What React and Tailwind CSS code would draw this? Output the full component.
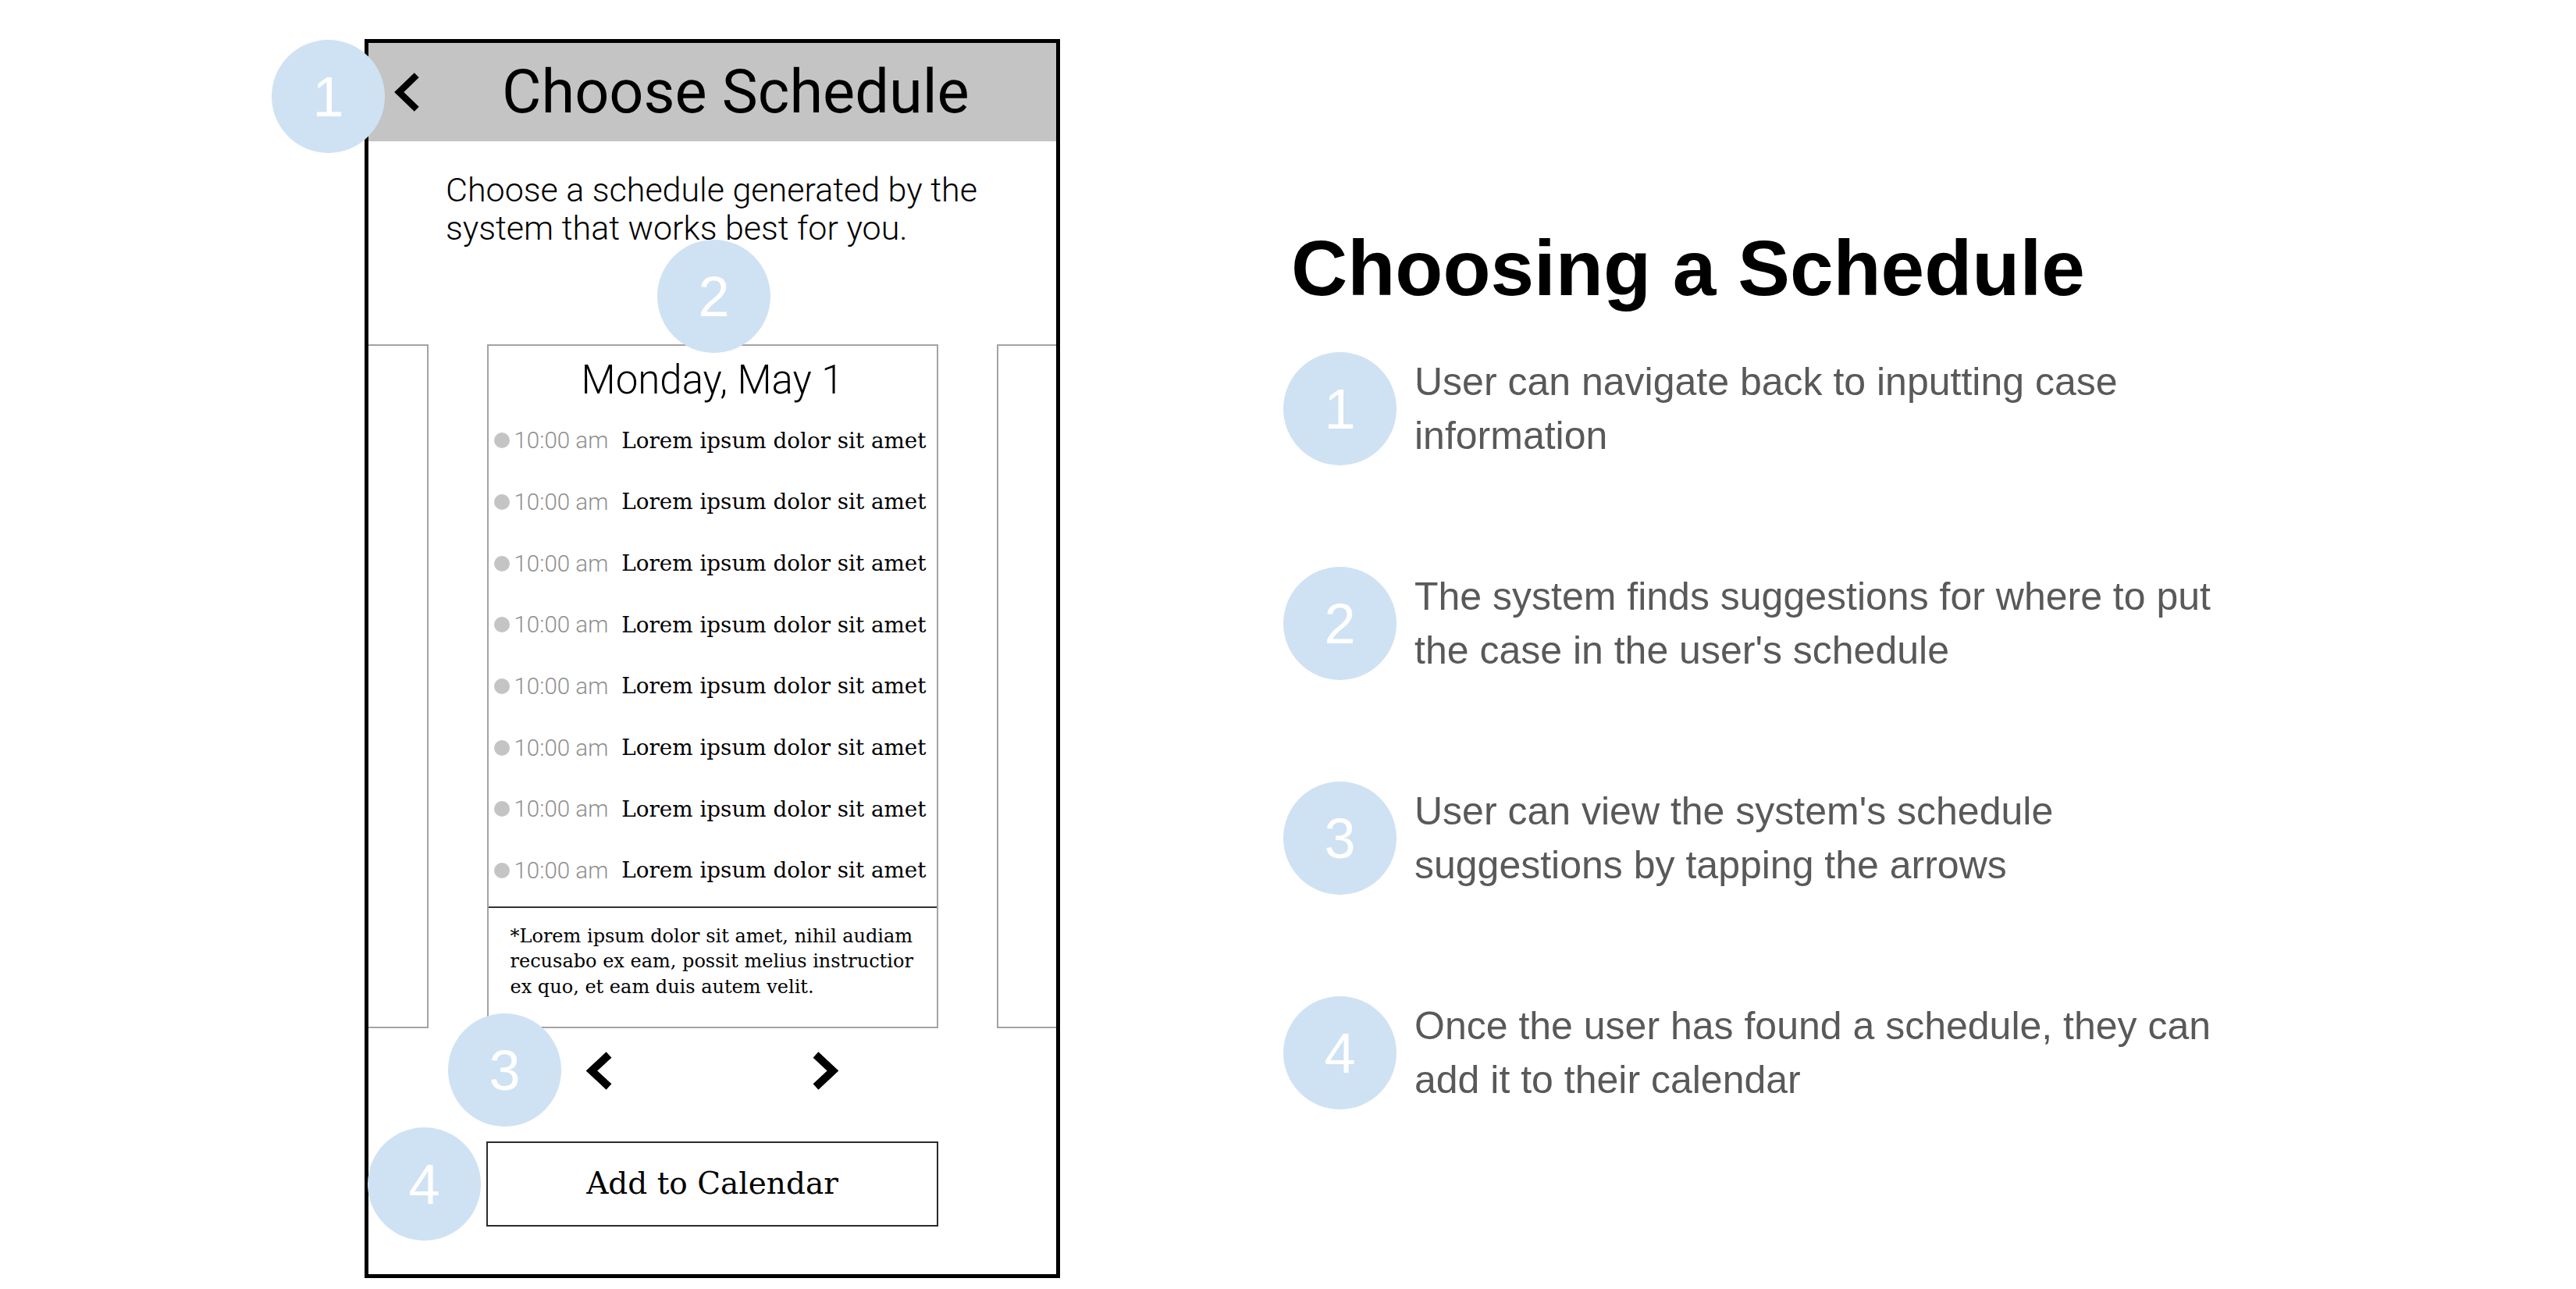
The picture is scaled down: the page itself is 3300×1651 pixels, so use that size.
import React from "react";

const rows = Array.from({ length: 8 }, (_, i) => i);

const notes = [
  { n: "1", lines: ["User can navigate back to inputting case", "information"] },
  { n: "2", lines: ["The system finds suggestions for where to put", "the case in the user's schedule"] },
  { n: "3", lines: ["User can view the system's schedule", "suggestions by tapping the arrows"] },
  { n: "4", lines: ["Once the user has found a schedule, they can", "add it to their calendar"] },
];

function Badge({ n, className = "" }) {
  return (
    <div
      className={`flex h-[145px] w-[145px] shrink-0 items-center justify-center rounded-full bg-[#cfe2f3] text-[72px] leading-none text-white ${className}`}
    >
      {n}
    </div>
  );
}

function Chevron({ dir = "left", w, h, sw }) {
  const pts =
    dir === "left"
      ? `${w - sw / 2},${sw / 2} ${sw / 2 + 2},${h / 2} ${w - sw / 2},${h - sw / 2}`
      : `${sw / 2},${sw / 2} ${w - sw / 2 - 2},${h / 2} ${sw / 2},${h - sw / 2}`;
  return (
    <svg width={w} height={h} viewBox={`0 0 ${w} ${h}`} className="shrink-0 overflow-visible">
      <polyline points={pts} fill="none" stroke="#000" strokeWidth={sw} strokeLinejoin="miter" />
    </svg>
  );
}

function DayCard() {
  return (
    <div className="flex w-[578px] shrink-0 flex-col border-2 border-[#a3a3a3] bg-white">
      <div className="h-[82px] pt-[14px] text-center font-['Roboto'] text-[51px] font-light leading-[60px] text-black">
        Monday, May 1
      </div>
      {rows.map((i) => (
        <div key={i} className="flex h-[78.7px] items-center pl-[7px]">
          <span className="h-[20px] w-[20px] rounded-full bg-[#c4c4c4]" />
          <span className="ml-[6px] font-['Roboto'] text-[29.5px] font-light text-[#8f8f8f]">10:00 am</span>
          <span className="ml-[17px] font-['DejaVu_Serif'] text-[27.8px] text-black">
            Lorem ipsum dolor sit amet
          </span>
        </div>
      ))}
      <div className="mt-[6px] border-t-2 border-[#333]" />
      <p className="whitespace-nowrap pl-[28px] pt-[20px] font-['DejaVu_Serif'] text-[24px] leading-[32.5px] text-black">
        *Lorem ipsum dolor sit amet, nihil audiam
        <br />
        recusabo ex eam, possit melius instructior
        <br />
        ex quo, et eam duis autem velit.
      </p>
    </div>
  );
}

function Phone() {
  return (
    <div className="flex h-full w-full flex-col border-[5px] border-black bg-white">
      <div className="flex h-[126px] shrink-0 items-center bg-[#c4c4c4]">
        <div className="ml-[33px]">
          <Chevron dir="left" w={33} h={52} sw={8.5} />
        </div>
        <span className="ml-[105px] font-['Roboto'] text-[77.5px] leading-none text-black">Choose Schedule</span>
      </div>

      <p className="ml-[99px] mt-[38px] font-['Roboto'] text-[43px] font-light leading-[49px] text-black">
        Choose a schedule generated by the
        <br />
        system that works best for you.
      </p>

      {/* carousel */}
      <div className="mt-[124px] flex h-[876px] shrink-0 justify-center gap-[75px] overflow-hidden">
        <div className="w-[578px] shrink-0 border-2 border-[#a3a3a3]" />
        <DayCard />
        <div className="w-[578px] shrink-0 border-2 border-[#a3a3a3]" />
      </div>

      <div className="flex h-[108px] items-center justify-center gap-[255px]">
        <Chevron dir="left" w={34} h={51} sw={10} />
        <Chevron dir="right" w={34} h={51} sw={10} />
      </div>

      <button className="mx-auto mt-[37px] flex h-[109px] w-[579px] items-center justify-center border-2 border-[#2b2b2b] bg-white font-['DejaVu_Serif'] text-[39px] text-black">
        Add to Calendar
      </button>
    </div>
  );
}

export default function App() {
  return (
    <div className="flex h-[1651px] w-[3300px] bg-white font-['Liberation_Sans',Arial,sans-serif]">
      <div className="relative ml-[467px] mt-[50px] h-[1587px] w-[891px] shrink-0">
        <Phone />
        <Badge n="1" className="absolute left-[-119px] top-[1px]" />
        <Badge n="2" className="absolute left-[375px] top-[257px]" />
        <Badge n="3" className="absolute left-[107px] top-[1248px]" />
        <Badge n="4" className="absolute left-[4px] top-[1394px]" />
      </div>

      <div className="ml-[286px] flex flex-col pt-[293px]">
        <h1 className="ml-[10px] text-[100px] font-bold leading-none text-black">Choosing a Schedule</h1>
        <div className="mt-[58px] flex flex-col gap-[130px]">
          {notes.map((it) => (
            <div key={it.n} className="flex h-[145px] items-center">
              <Badge n={it.n} />
              <p className="ml-[23px] whitespace-nowrap text-[50px] leading-[69px] text-[#595959]">
                {it.lines[0]}
                <br />
                {it.lines[1]}
              </p>
            </div>
          ))}
        </div>
      </div>
    </div>
  );
}
